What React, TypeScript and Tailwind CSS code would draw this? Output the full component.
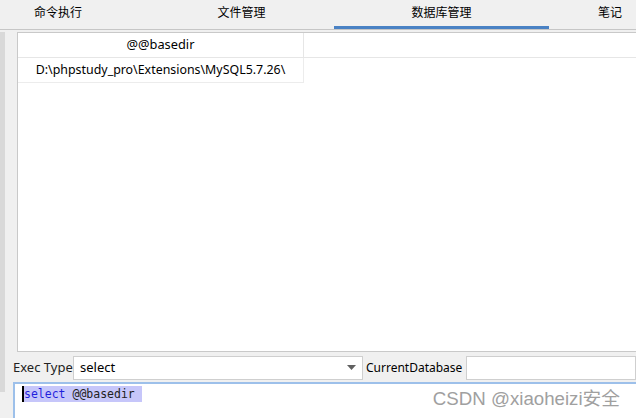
import React from "react";

const ui = { fontFamily: '"Noto Sans", "Noto Sans CJK SC", sans-serif' };

export default function App() {
  return (
    <div
      className="w-[636px] h-[418px] bg-[#f0f0f0] overflow-hidden relative flex flex-col text-[12px] text-black"
      style={ui}
    >
      {/* Tab bar */}
      <div className="h-[30px] flex items-stretch border-b border-[#c6c6c6] shrink-0 overflow-hidden">
        <div className="w-[116px] shrink-0 flex items-center justify-center pb-[4px] leading-none">命令执行</div>
        <div className="w-[33px] shrink-0" />
        <div className="w-[185px] shrink-0 flex items-center justify-center pb-[4px] leading-none">文件管理</div>
        <div className="w-[215px] shrink-0 relative flex items-center justify-center pb-[4px] leading-none">
          数据库管理
          <div className="absolute left-0 right-0 bottom-0 h-[3px] bg-[#4a82c4]" />
        </div>
        <div className="w-[122px] shrink-0 flex items-center justify-center pb-[4px] leading-none">笔记</div>
      </div>

      {/* Body */}
      <div className="flex-1 flex min-h-0">
        <div className="w-[5px] shrink-0 self-start mt-[2px] h-[360px] bg-[#d9d9d9]" />
        <div className="flex-1 flex flex-col min-w-0">
          {/* Table */}
          <div className="ml-[12px] mt-[2px] h-[320px] bg-white border-t border-l border-b border-[#c9c9c9] flex flex-col text-[12.4px]">
            <div className="h-[25px] flex border-b border-[#e6e6e6]">
              <div className="w-[286px] flex items-center justify-center border-r border-[#e6e6e6] text-[12.8px]">
                @@basedir
              </div>
            </div>
            <div className="h-[25px] w-[286px] flex items-center justify-center border-r border-b border-[#ececec]">
              D:\phpstudy_pro\Extensions\MySQL5.7.26\
            </div>
          </div>

          {/* Exec type row */}
          <div className="h-[29px] mt-[1px] flex items-center pl-[8px] gap-0">
            <span className="w-[60px] text-[13px] text-[#222]">Exec Type</span>
            <div className="w-[290px] h-[24px] bg-white border border-[#cfcfcf] flex items-center pl-[6px] pr-[6px] justify-between text-[13px]">
              <span>select</span>
              <svg width="9" height="5" viewBox="0 0 9 5">
                <path d="M0 0 L9 0 L4.5 5 Z" fill="#606060" />
              </svg>
            </div>
            <span className="ml-[3px] w-[100px]">CurrentDatabase</span>
            <div className="flex-1 h-[24px] bg-white border border-[#cfcfcf]" />
          </div>

          {/* Editor */}
          <div className="ml-[8px] flex-1 bg-white border-t-2 border-l-2 border-[#9dc0ea] pl-[7px] pt-[1px]">
            <div className="flex items-center h-[17px]">
              <span className="w-[2px] h-[16px] bg-black" />
              <span
                className="bg-[#c6c6fa] text-[11.5px] leading-[16px] whitespace-pre pr-[7px]"
                style={{ fontFamily: '"DejaVu Sans Mono", monospace' }}
              >
                <span className="text-[#1f1fdc]">select</span>
                <span className="text-[#222]"> @@basedir</span>
              </span>
            </div>
          </div>
        </div>
      </div>

      {/* Watermark */}
      <div
        className="absolute right-[16px] bottom-[9px] text-[18.7px] leading-none text-[#a0a0a0]"
        style={{ fontFamily: '"Liberation Sans", "Noto Sans CJK SC", sans-serif' }}
      >
        CSDN @xiaoheizi安全
      </div>
    </div>
  );
}
